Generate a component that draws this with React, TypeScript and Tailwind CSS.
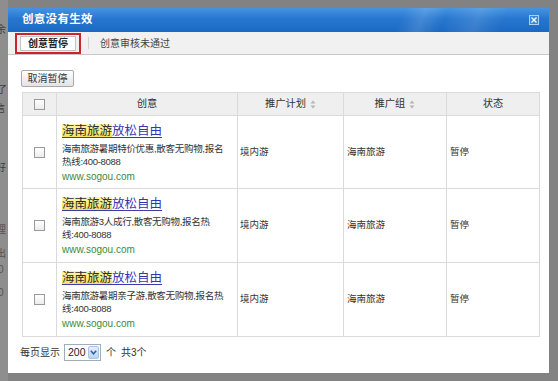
import React from 'react';

const FONT = '"Liberation Sans", "Noto Sans CJK SC", sans-serif';

const rows = [
  { desc: ['海南旅游暑期特价优惠,散客无购物,报名', '热线:400-8088'] },
  { desc: ['海南旅游3人成行,散客无购物,报名热', '线:400-8088'] },
  { desc: ['海南旅游暑期亲子游,散客无购物,报名热', '线:400-8088'] },
];

function Checkbox() {
  return (
    <span className="inline-block w-[11px] h-[11px] border border-[#9a9a9a] bg-[linear-gradient(180deg,#ffffff,#ececec)] align-middle" />
  );
}

function SortIcon() {
  return (
    <svg width="6" height="9" viewBox="0 0 6 9" className="inline-block ml-[4px] align-middle">
      <path d="M3 0.5 L5.5 3.5 H0.5 Z" fill="#b5b5b5" />
      <path d="M3 8.5 L5.5 5.5 H0.5 Z" fill="#b5b5b5" />
    </svg>
  );
}

export default function App() {
  return (
    <div
      className="relative w-[558px] h-[381px] overflow-hidden bg-[#828282] pt-[8px] pl-[8px]"
      style={{ fontFamily: FONT }}
    >
      {/* page behind the overlay, peeking out on the left */}
      <div className="absolute left-0 top-0 w-[8px] h-full bg-[#8e8e8e] overflow-hidden text-[10px] text-[#3c3c3c]">
        <span className="absolute left-[-4px] top-[22px]">余</span>
        <span className="absolute left-[-3px] top-[82px]">了</span>
        <span className="absolute left-[-5px] top-[101px]">信</span>
        <span className="absolute left-[-4px] top-[160px]">好</span>
        <span className="absolute left-[-4px] top-[222px] text-[#555]">理</span>
        <span className="absolute left-[-4px] top-[246px] text-[#555]">出</span>
        <span className="absolute left-[-2px] top-[262px] text-[#555]">0</span>
        <span className="absolute left-[-2px] top-[285px] text-[#555]">0</span>
      </div>

      <div className="relative w-[541px] h-[365px] bg-white flex flex-col">
        {/* title bar */}
        <div className="h-[24px] flex items-center justify-between pl-[14px] pr-[10px] bg-[image:linear-gradient(112deg,transparent_72%,rgba(255,255,255,0.14)_76%,transparent_80%,rgba(255,255,255,0.12)_86%,transparent_91%),linear-gradient(180deg,#4594e2_0%,#2676cf_45%,#1b69c2_100%)]">
          <span className="text-[11.5px] font-bold text-white tracking-[0.3px]">创意没有生效</span>
          <span className="w-[10px] h-[10px] border border-[#a9d2f5] bg-[#3a86d6] flex items-center justify-center">
            <svg width="6" height="6" viewBox="0 0 6 6">
              <path d="M0.5 0.5 L5.5 5.5 M5.5 0.5 L0.5 5.5" stroke="#ffffff" strokeWidth="1.4" />
            </svg>
          </span>
        </div>

        {/* tabs */}
        <div className="h-[23px] bg-[#f1f1f1] border-b border-[#c8c8c8] flex items-end pl-[7px]">
          <div className="w-[66px] h-[21px] border-2 border-[#c9252b] flex items-center justify-center">
            <div className="w-[56px] h-[15px] bg-white border border-[#c4c4c4] flex items-center justify-center text-[10px] font-bold text-[#222]">
              创意暂停
            </div>
          </div>
          <div className="w-px h-[12px] bg-[#d2d2d2] ml-[7px] mb-[5px]" />
          <div className="ml-[11px] h-full flex items-center text-[10px] text-[#444]">创意审核未通过</div>
        </div>

        {/* content */}
        <div className="flex-1 flex flex-col pl-[13px] pt-[15px]">
          <button className="w-[53px] h-[17px] border border-[#a9a9a9] rounded-[2px] bg-[linear-gradient(180deg,#ffffff,#e3e3e3)] text-[10px] text-[#333] flex items-center justify-center">
            取消暂停
          </button>

          <table className="mt-[5px] ml-[1px] w-[517px] table-fixed border-collapse text-[9.5px] text-[#333]">
            <colgroup>
              <col className="w-[34px]" />
              <col className="w-[181px]" />
              <col className="w-[106px]" />
              <col className="w-[103px]" />
              <col className="w-[93px]" />
            </colgroup>
            <thead>
              <tr className="h-[23px] bg-[#efefef] text-[10.25px]">
                <th className="border border-[#dadada] font-normal text-center">
                  <Checkbox />
                </th>
                <th className="border border-[#dadada] font-normal text-center">创意</th>
                <th className="border border-[#dadada] font-normal text-center">
                  推广计划
                  <SortIcon />
                </th>
                <th className="border border-[#dadada] font-normal text-center">
                  推广组
                  <SortIcon />
                </th>
                <th className="border border-[#dadada] font-normal text-center">状态</th>
              </tr>
            </thead>
            <tbody>
              {rows.map((r, i) => (
                <tr key={i} className={i === 0 ? 'h-[73px]' : 'h-[74px]'}>
                  <td className="border border-[#dadada] text-center align-middle">
                    <Checkbox />
                  </td>
                  <td className="border border-[#dadada] pl-[5px] pt-[7px] pb-[5px] align-top whitespace-nowrap">
                    <div className="text-[12.5px] leading-[17px] underline decoration-[#3a3aa8] underline-offset-[2px]">
                      <span className="bg-[linear-gradient(180deg,#fff6a8,#f7df5c)] text-[#2c2c2c]">海南旅游</span>
                      <span className="text-[#3434b0]">放松自由</span>
                    </div>
                    <div className="leading-[13px] mt-[2px] tracking-[-0.3px]">{r.desc[0]}</div>
                    <div className="leading-[13px] tracking-[-0.3px]">{r.desc[1]}</div>
                    <div className="leading-[13px] mt-[2px] text-[10px] text-[#3b8a3b]">www.sogou.com</div>
                  </td>
                  <td className="border border-[#dadada] pl-[2px] align-middle">境内游</td>
                  <td className="border border-[#dadada] pl-[3px] align-middle">海南旅游</td>
                  <td className="border border-[#dadada] pl-[3px] align-middle">暂停</td>
                </tr>
              ))}
            </tbody>
          </table>

          <div className="mt-[7px] flex items-center text-[10px] text-[#333]">
            <span className="-ml-[1px]">每页显示</span>
            <div className="ml-[4px] w-[37px] h-[17px] border border-[#a3adb9] bg-white flex items-center justify-between pl-[3px] pr-[1px]">
              <span className="text-[10.5px] text-[#222]">200</span>
              <span className="w-[11px] h-[13px] rounded-[2px] border border-[#a9c3e3] bg-[linear-gradient(180deg,#e6f0fb,#bcd3ee)] flex items-center justify-center">
                <svg width="7" height="5" viewBox="0 0 7 5">
                  <path d="M0.8 0.8 L3.5 3.8 L6.2 0.8" fill="none" stroke="#2d5fa8" strokeWidth="1.5" />
                </svg>
              </span>
            </div>
            <span className="ml-[5px]">个</span>
            <span className="ml-[5px]">共3个</span>
          </div>
        </div>
      </div>
    </div>
  );
}
